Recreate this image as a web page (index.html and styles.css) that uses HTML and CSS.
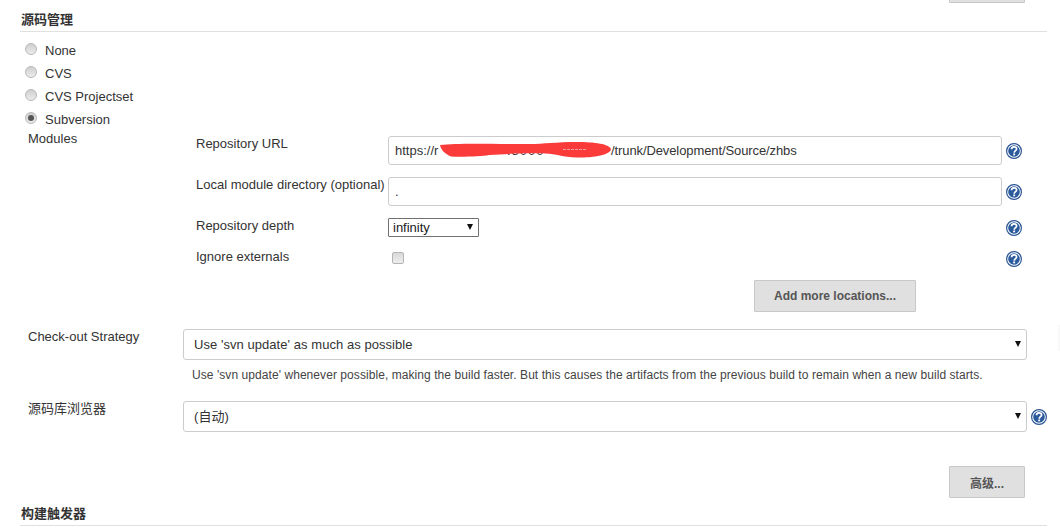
FILE: index.html
```html
<!DOCTYPE html>
<html lang="zh">
<head>
<meta charset="utf-8">
<title>源码管理</title>
<link rel="stylesheet" href="styles.css">
</head>
<body>
<div class="page">
  <div class="top-row"><button class="btn btn-top" type="button"></button></div>
  <div class="section-head first">源码管理</div>
  <div class="radios">
    <label class="radio-row"><span class="radio"></span>None</label>
    <label class="radio-row"><span class="radio"></span>CVS</label>
    <label class="radio-row"><span class="radio"></span>CVS Projectset</label>
    <label class="radio-row"><span class="radio on"></span>Subversion</label>
  </div>
  <div class="modules">
    <div class="modules-label">Modules</div>
    <div class="modules-body">
      <div class="mrow mrow-url">
        <div class="mlabel">Repository URL</div>
        <div class="field url-field"><span>https://r</span>
          <span class="peek">:8000</span>
          <span class="tail">/trunk/Development/Source/zhbs</span>
          <svg class="scribble" width="176" height="18" viewBox="0 0 176 18"><path d="M3 3C20 1 50 2 92 2C108 2 118 0 140 0C158 0 172 2 174 7C174 12 160 16 140 15.500C125 15 120 12 108 11.500C85 11 70 12 52 13C45 14.500 25 15 14 14.500C8 12 4 8 3 3Z" fill="#fb3a3a"/><path d="M126 7.500H150" stroke="#e9a0a0" stroke-width="1" stroke-dasharray="3 1"/></svg>
        </div>
        <svg class="help"><use href="#q"/></svg>
      </div>
      <div class="mrow mrow-local">
        <div class="mlabel">Local module directory (optional)</div>
        <div class="field local-field">.</div>
        <svg class="help"><use href="#q"/></svg>
      </div>
      <div class="mrow mrow-depth">
        <div class="mlabel">Repository depth</div>
        <div class="control-cell"><div class="mini-select">infinity<span class="arrow"></span></div></div>
        <svg class="help"><use href="#q"/></svg>
      </div>
      <div class="mrow mrow-ignore">
        <div class="mlabel">Ignore externals</div>
        <div class="control-cell"><span class="check"></span></div>
        <svg class="help"><use href="#q"/></svg>
      </div>
      <div class="add-row"><button class="btn btn-add" type="button">Add more locations...</button></div>
    </div>
  </div>
  <div class="frow frow-checkout">
    <div class="flabel">Check-out Strategy</div>
    <div class="big-select">Use 'svn update' as much as possible<span class="arrow"></span></div>
  </div>
  <div class="hint">Use 'svn update' whenever possible, making the build faster. But this causes the artifacts from the previous build to remain when a new build starts.</div>
  <div class="frow frow-browser">
    <div class="flabel">源码库浏览器</div>
    <div class="big-select">(自动)<span class="arrow"></span></div>
    <svg class="help help-big"><use href="#q"/></svg>
  </div>
  <div class="adv-row"><button class="btn btn-adv" type="button">高级...</button></div>
  <div class="section-head second">构建触发器</div>
</div>
<div class="edge-shadow"></div>
<svg class="defs" width="0" height="0">
  <symbol id="q" viewBox="0 0 16 16">
    <circle cx="8" cy="8" r="7.400" fill="#fff" stroke="#2a5596" stroke-width="1.200"/>
    <circle cx="8" cy="8" r="5.800" fill="#2a5a9c"/>
    <path d="M5.500 6.200C5.600 4.600 6.700 3.900 8 3.900C9.500 3.900 10.600 4.800 10.600 6.100C10.600 7.700 8.300 7.700 8.200 9.700" fill="none" stroke="#fff" stroke-width="1.700"/>
    <rect x="7.200" y="10.500" width="1.900" height="1.800" fill="#fff"/>
  </symbol>
</svg>
</body>
</html>
```
FILE: styles.css
```css
* { box-sizing: border-box; }
html, body { margin: 0; padding: 0; background: #fff; }
body {
  width: 1060px;
  height: 531px;
  overflow: hidden;
  position: relative;
  font-family: "Liberation Sans", "Noto Sans CJK SC", sans-serif;
  font-size: 13px;
  color: #333;
}
.page { padding-left: 20px; width: 1047px; }
.defs { display: block; }
.edge-shadow {
  position: absolute;
  right: 0;
  top: 325px;
  width: 3px;
  height: 26px;
  background: linear-gradient(to right, #fff, #f6f6f6);
}

.top-row { height: 11px; display: flex; justify-content: flex-end; padding-right: 22px; }
.btn {
  display: block;
  background: #e0e0e0;
  border: 1px solid #c8c8c8;
  border-radius: 1px;
  font-family: inherit;
  font-size: 12px;
  font-weight: bold;
  color: #555;
  padding: 0;
}
.btn-top { width: 76px; height: 4px; margin-top: -1px; }

.section-head {
  font-weight: bold;
  font-size: 13px;
  color: #333;
  border-bottom: 1px solid #e0e0e0;
  line-height: 18px;
  height: 21px;
  padding-left: 1px;
}
.radios { padding-top: 7px; }
.radio-row { display: flex; align-items: center; height: 23px; padding-left: 5px; }
.radio {
  width: 12px;
  height: 12px;
  margin-right: 8px;
  margin-top: -4px;
  border-radius: 50%;
  border: 1px solid #b8b8b8;
  background: linear-gradient(#cfcfcf, #ececec);
  display: flex;
  align-items: center;
  justify-content: center;
}
.radio.on::after {
  content: "";
  width: 6px;
  height: 6px;
  border-radius: 50%;
  background: #555;
}
.modules { display: flex; margin-top: -1px; }
.modules-label { width: 176px; padding-left: 8px; line-height: 16px; margin-top: 1px; }
.modules-body { width: 851px; padding-top: 6px; }
.mrow { display: flex; }
.mlabel { width: 192px; line-height: 16px; flex: none; }
.field {
  width: 614px;
  height: 29px;
  flex: none;
  border: 1px solid #ccc;
  border-radius: 3px;
  padding-left: 6px;
  line-height: 27px;
  color: #333;
  position: relative;
  white-space: pre;
}
.url-field { display: flex; }
.peek { position: absolute; left: 118px; top: 0; letter-spacing: 1px; }
.tail { position: absolute; left: 222px; top: 0; letter-spacing: -0.100px; }
.scribble { position: absolute; left: 48px; top: 5px; }
.help { width: 16px; height: 16px; flex: none; margin-left: 4px; margin-top: 7px; }
.mrow-url { height: 41px; }
.mrow-local { height: 41px; }
.mrow-depth { height: 34px; }
.mrow-ignore { height: 28px; }
.mrow-depth .help { margin-top: 2px; }
.mrow-ignore .mlabel { margin-top: -3px; }
.mrow-ignore .help { margin-top: -1px; }
.control-cell { width: 614px; flex: none; }
.mini-select {
  width: 91px;
  height: 19px;
  border: 1px solid #707070;
  border-radius: 1px;
  padding-left: 4px;
  line-height: 18px;
  color: #222;
  position: relative;
}
.arrow {
  position: absolute;
  width: 0;
  height: 0;
  border-left: 3.500px solid transparent;
  border-right: 3.500px solid transparent;
  border-top: 6px solid #111;
}
.mini-select .arrow { right: 5px; top: 5px; }
.check {
  display: block;
  width: 12px;
  height: 12px;
  margin: 0 0 0 4px;
  border: 1px solid #b5b5b5;
  border-radius: 2px;
  background: linear-gradient(#d8d8d8, #eee);
}
.add-row { margin-left: 558px; }
.btn-add { width: 162px; height: 32px; }
.frow { display: flex; }
.frow-checkout { margin-top: 17px; height: 32px; }
.flabel { width: 163px; flex: none; padding-left: 8px; line-height: 16px; }
.big-select {
  width: 844px;
  height: 31px;
  flex: none;
  border: 1px solid #ccc;
  border-radius: 3px;
  padding-left: 10px;
  line-height: 29px;
  color: #333;
  letter-spacing: 0.050px;
  position: relative;
}
.big-select .arrow { right: 5px; top: 11px; }
.hint { margin-left: 172px; font-size: 12px; line-height: 14px; margin-top: 7px; color: #444; letter-spacing: 0.065px; }
.frow-browser { margin-top: 19px; height: 31px; }
.help-big { margin-top: 8px; }
.adv-row { display: flex; justify-content: flex-end; padding-right: 22px; margin-top: 34px; }
.btn-adv { width: 76px; height: 32px; }
.section-head.second { margin-top: 7px; }
```
